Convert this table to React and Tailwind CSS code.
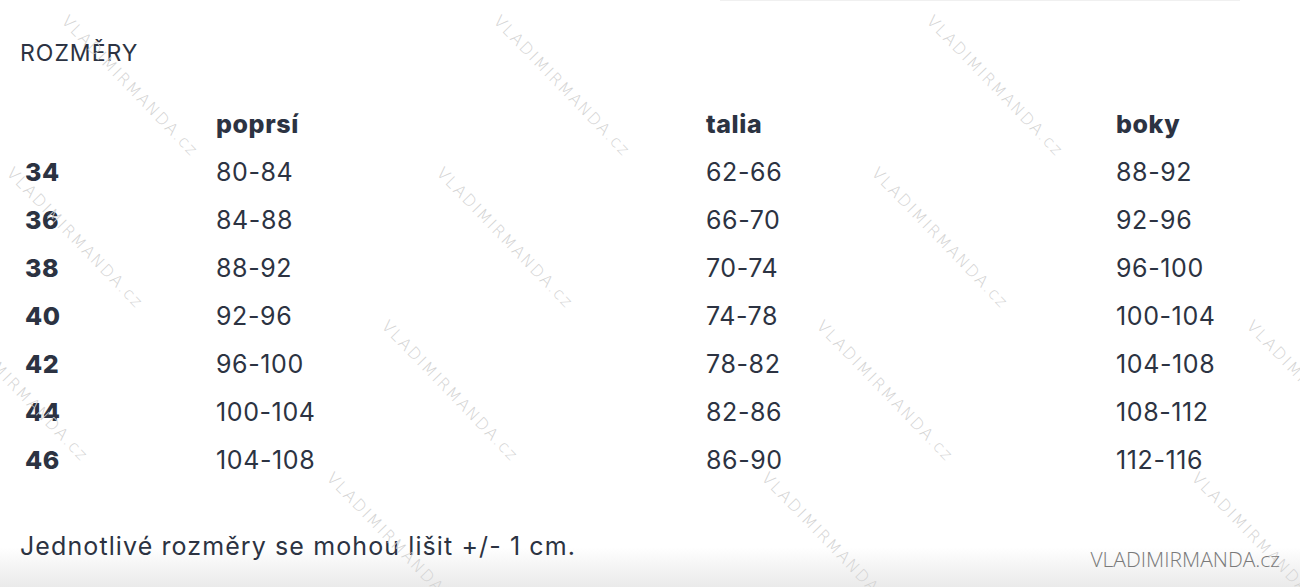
const rows = [
  ["34", "80-84", "62-66", "88-92"],
  ["36", "84-88", "66-70", "92-96"],
  ["38", "88-92", "70-74", "96-100"],
  ["40", "92-96", "74-78", "100-104"],
  ["42", "96-100", "78-82", "104-108"],
  ["44", "100-104", "82-86", "108-112"],
  ["46", "104-108", "86-90", "112-116"],
];

// top-left corner of each diagonal watermark
const marks = [
  [65, 10], [497, 10], [930, 10],
  [10, 162], [440, 162], [875, 162], [1305, 162],
  [-45, 315], [385, 315], [820, 315], [1250, 315],
  [330, 467], [765, 467], [1195, 467],
];

export default function App() {
  return (
    <div
      className="relative w-[1300px] h-[587px] overflow-hidden bg-white text-[#2c3342]"
      style={{ fontFamily: "Inter, 'Noto Sans', sans-serif" }}
    >
      <div className="absolute left-[720px] top-0 w-[520px] h-px bg-[#f0f0f0]" />
      <div className="absolute left-0 right-0 bottom-0 h-[40px] bg-gradient-to-b from-white to-[#eaeaea]" />

      <div className="relative pl-[20px] pt-[38px]">
        <h2 className="text-[23px] leading-[30px] tracking-[1px]">ROZMĚRY</h2>

        <div className="mt-[32px] grid grid-cols-[196px_490px_410px_1fr] text-[25px] tracking-[0.6px]">
          <div />
          <div className="font-extrabold h-[48px] leading-[48px]">poprsí</div>
          <div className="font-extrabold h-[48px] leading-[48px]">talia</div>
          <div className="font-extrabold h-[48px] leading-[48px]">boky</div>
          {rows.map((r) => (
            <div key={r[0]} className="contents">
              <div className="font-extrabold pl-[5px] h-[48px] leading-[48px]">{r[0]}</div>
              <div className="h-[48px] leading-[48px]">{r[1]}</div>
              <div className="h-[48px] leading-[48px]">{r[2]}</div>
              <div className="h-[48px] leading-[48px]">{r[3]}</div>
            </div>
          ))}
        </div>

        <p className="mt-[46px] text-[25px] leading-[32px] tracking-[1.1px]">
          Jednotlivé rozměry se mohou lišit +/- 1 cm.
        </p>
      </div>

      {marks.map(([x, y], i) => (
        <div
          key={i}
          className="absolute origin-top-left rotate-[46deg] whitespace-nowrap text-[16px] tracking-[1.8px] text-[#d2d2d2]"
          style={{ left: x + 8, top: y, fontFamily: "'DejaVu Sans', sans-serif", fontWeight: 300 }}
        >
          VLADIMIRMANDA.cz
        </div>
      ))}

      <div
        className="absolute right-[20px] bottom-[12px] text-[21px] text-[#7a7a7a]"
        style={{ fontFamily: "'Open Sans', sans-serif", fontWeight: 300 }}
      >
        VLADIMIRMANDA.cz
      </div>
    </div>
  );
}
